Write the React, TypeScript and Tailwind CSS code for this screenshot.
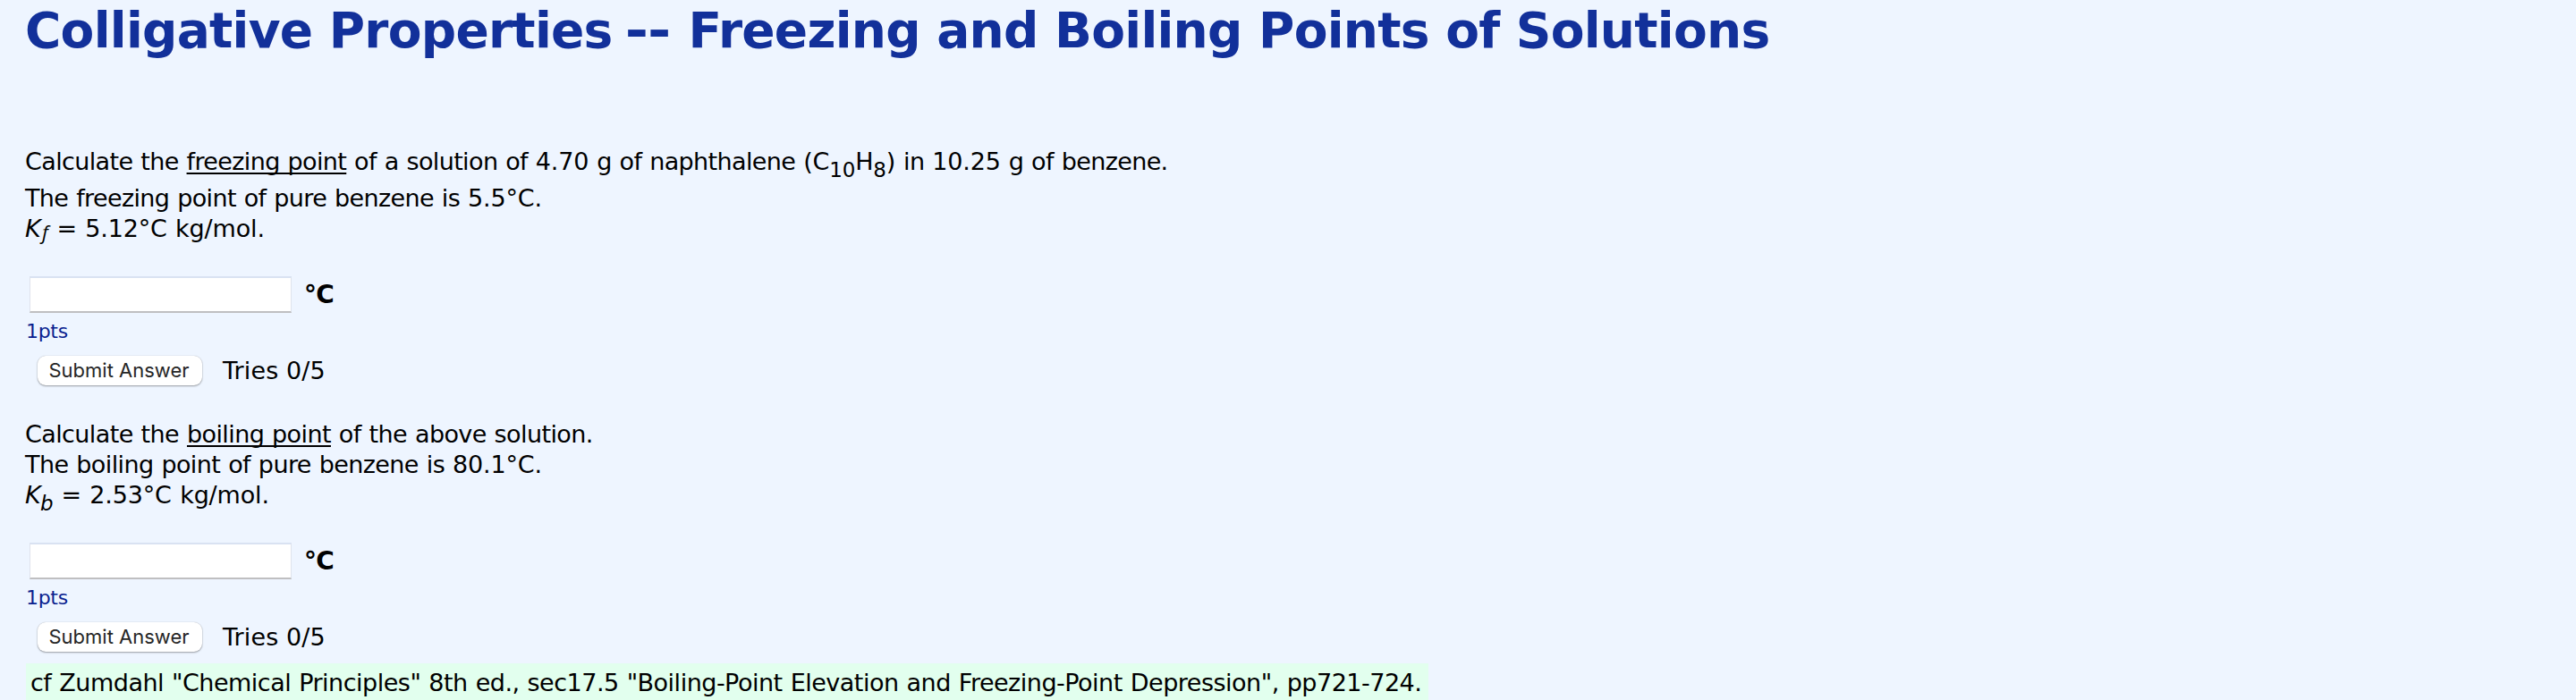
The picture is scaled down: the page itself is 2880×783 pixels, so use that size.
import type { ReactNode } from 'react';

function Sub({ children }: { children: ReactNode }) {
  return <span className="relative top-[8px] text-[23px] leading-none">{children}</span>;
}

function Num({ children }: { children: ReactNode }) {
  return <span className="tracking-[-0.15px]">{children}</span>;
}

function Answer() {
  return (
    <div>
      <div className="flex h-[41px] items-center pl-[33px]">
        <input
          type="text"
          className="h-[41px] w-[293px] border border-t-2 border-b-2 border-[#dfe3ec] border-t-[#d9e2f2] border-b-[#bfbfc1] bg-white outline-none"
        />
        <span className="ml-[14px] text-[28px] leading-[34px] font-bold tracking-[-0.8px]">°C</span>
      </div>
      <div className="mt-[5px] h-[32px] pl-[29px] text-[22px] leading-[32px] tracking-[-0.3px] text-[#0a1f8f]">1pts</div>
      <div className="mt-[11px] flex h-[34px] items-center pl-[42px]">
        <button className="-mt-px h-[33px] w-[184px] rounded-[9px] bg-white pr-[2px] font-['Inter',sans-serif] text-[22px] leading-[33px] whitespace-nowrap text-[#262626] shadow-[0_1px_2px_rgba(0,0,0,0.35),0_0_1px_rgba(0,0,0,0.25)]">
          Submit Answer
        </button>
        <span className="ml-[23px] text-[27px] leading-[34px] tracking-[0.1px]">Tries 0/5</span>
      </div>
    </div>
  );
}

export default function App() {
  return (
    <main className="h-[783px] w-[2880px] overflow-hidden bg-[#eef5ff] font-['DejaVu_Sans',sans-serif] whitespace-nowrap text-black">
      <h1 className="h-[164px] pl-[28px] text-[55px] leading-[69px] font-bold tracking-[-0.74px] text-[#12309a]">
        Colligative Properties <span className="mr-[5px] -ml-px inline-block scale-x-[1.15]">--</span> Freezing and Boiling Points of Solutions
      </h1>
      <section className="h-[145px] pl-[28px] text-[27px] leading-[34px] tracking-[-0.63px] [word-spacing:0.9px]">
        <p className="h-[41px]">
          Calculate the <span className="underline decoration-2 underline-offset-[3px] [text-decoration-skip-ink:none]">freezing point</span> of a solution of{' '}
          <Num>4.70</Num> g of naphthalene <Num>(C<Sub>10</Sub>H<Sub>8</Sub>)</Num> in <Num>10.25</Num> g of benzene.
        </p>
        <p className="h-[34px]">The freezing point of pure benzene is <Num>5.5°C.</Num></p>
        <p className="h-[34px]">
          <i>K<span className="relative top-[3px] left-[2px] inline-block w-[9px] font-['Open_Sans'] text-[22px] leading-none">f</span></i>
          <Num> = 5.12°C kg/mol.</Num>
        </p>
      </section>
      <Answer />
      <section className="mt-[37px] h-[138px] pl-[28px] text-[27px] leading-[34px] tracking-[-0.6px] [word-spacing:0.9px]">
        <p className="h-[34px]">
          Calculate the <span className="underline decoration-2 underline-offset-[3px] [text-decoration-skip-ink:none]">boiling point</span> of the above
          solution.
        </p>
        <p className="h-[34px]">The boiling point of pure benzene is <Num>80.1°C.</Num></p>
        <p className="h-[34px]">
          <i>K<Sub>b</Sub></i><Num> = 2.53°C kg/mol.</Num>
        </p>
      </section>
      <Answer />
      <footer className="mt-[12px] ml-[29px] h-[42px] w-[1568px] bg-[#e2ffee] pl-[5px] text-[27px] leading-[43px] tracking-[-0.5px] [word-spacing:0.9px]">
        cf Zumdahl "Chemical Principles" 8th ed., sec17.5 "Boiling-Point Elevation and Freezing-Point Depression", pp721-724.
      </footer>
    </main>
  );
}
